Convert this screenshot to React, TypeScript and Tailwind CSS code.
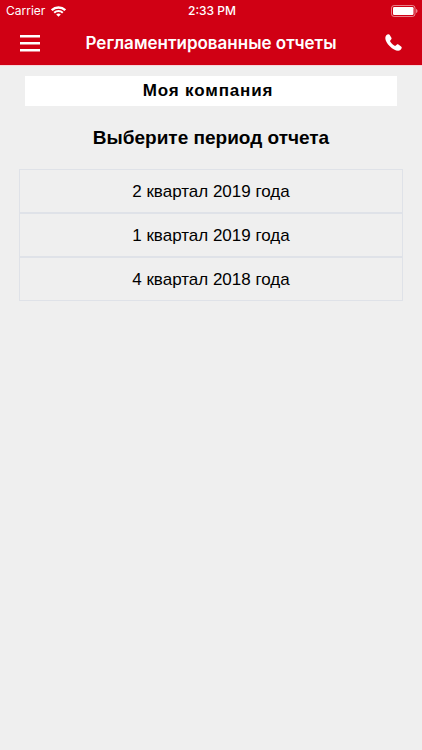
const periods = ['2 квартал 2019 года', '1 квартал 2019 года', '4 квартал 2018 года']

function WifiIcon() {
  return (
    <svg viewBox="0 0 15 11" className="h-[11px] w-[15px]" fill="none" stroke="currentColor" aria-hidden="true">
      <path d="M.8 4.200a9.600 9.600 0 0 1 13.400 0" strokeWidth="2.300" />
      <path d="M3.200 6.800a6.100 6.100 0 0 1 8.600 0" strokeWidth="2" />
      <path d="M7.500 10.800 5.200 8.500a3.300 3.300 0 0 1 4.600 0z" fill="currentColor" stroke="none" />
    </svg>
  )
}

function BatteryIcon() {
  return (
    <svg viewBox="0 0 27 12" className="h-3 w-[27px]" aria-hidden="true">
      <rect x="0.5" y="0.5" width="23.5" height="11" rx="2.6" fill="none" stroke="#fff" strokeOpacity="0.5" />
      <rect x="2" y="2" width="20.5" height="8" rx="1.2" fill="#fff" />
      <path d="M25 4v4c1-.3 1.500-1.100 1.500-2S26 4.300 25 4z" fill="#fff" fillOpacity="0.5" />
    </svg>
  )
}

function MenuIcon() {
  return (
    <svg viewBox="0 0 20 18" className="h-[18px] w-5" fill="currentColor" aria-hidden="true">
      <path d="M0 0h20v2.500H0zM0 7h20v2.500H0zM0 14h20v2.500H0z" />
    </svg>
  )
}

function PhoneIcon() {
  return (
    <svg viewBox="0 0 17 17" className="size-[17px]" fill="currentColor" aria-hidden="true">
      <path d="M3 .2C1.500.7.3 2 .3 3.900c0 2.500 1.700 5.500 4.500 8.300s5.800 4.500 8.300 4.500c1.800 0 3.100-1.200 3.600-2.700.2-.7 0-1.200-.6-1.600l-2.700-1.800c-.6-.4-1.200-.4-1.700.1l-1.200 1.100c-.3.200-.6.200-.9 0C8.100 10.800 6.200 8.900 5.200 7.400c-.2-.3-.2-.6.1-.9l1-1.200c.4-.5.4-1 .1-1.600L4.600.8C4.200.2 3.700 0 3 .2z" />
    </svg>
  )
}

function StatusBar() {
  return (
    <div className="grid h-[22px] grid-cols-3 items-center pr-1 pl-1.5 text-xs">
      <div className="flex items-center gap-1.5">
        <span>Carrier</span>
        <WifiIcon />
      </div>
      <span className="text-center font-medium">2:33 PM</span>
      <div className="flex justify-end">
        <BatteryIcon />
      </div>
    </div>
  )
}

export default function App() {
  return (
    <div className="min-h-screen bg-[#efefef] font-['Liberation_Sans',Arial,sans-serif] text-black">
      <header className="border-b border-[#f7d5d9] bg-[#d00014] font-[Inter,sans-serif] text-white">
        <StatusBar />
        <div className="flex h-[43px] items-center justify-between px-5">
          <button type="button" aria-label="Меню">
            <MenuIcon />
          </button>
          <h1 className="text-[17px] font-semibold">Регламентированные отчеты</h1>
          <button type="button" aria-label="Позвонить" className="flex h-5 w-5 justify-end">
            <PhoneIcon />
          </button>
        </div>
      </header>

      <main className="px-[19px] pt-2.5">
        <div className="mx-1.5 bg-white pr-1.5 text-center text-[17px] leading-[30px] font-bold tracking-wider">
          Моя компания
        </div>
        <h2 className="pt-[17px] pb-4 text-center text-[19px] leading-[30px] font-bold">Выберите период отчета</h2>
        <ul>
          {periods.map((period) => (
            <li key={period}>
              <button type="button" className="h-11 w-full border border-[#dfe2e8] pt-0.5 text-center text-[17px]">
                {period}
              </button>
            </li>
          ))}
        </ul>
      </main>
    </div>
  )
}
